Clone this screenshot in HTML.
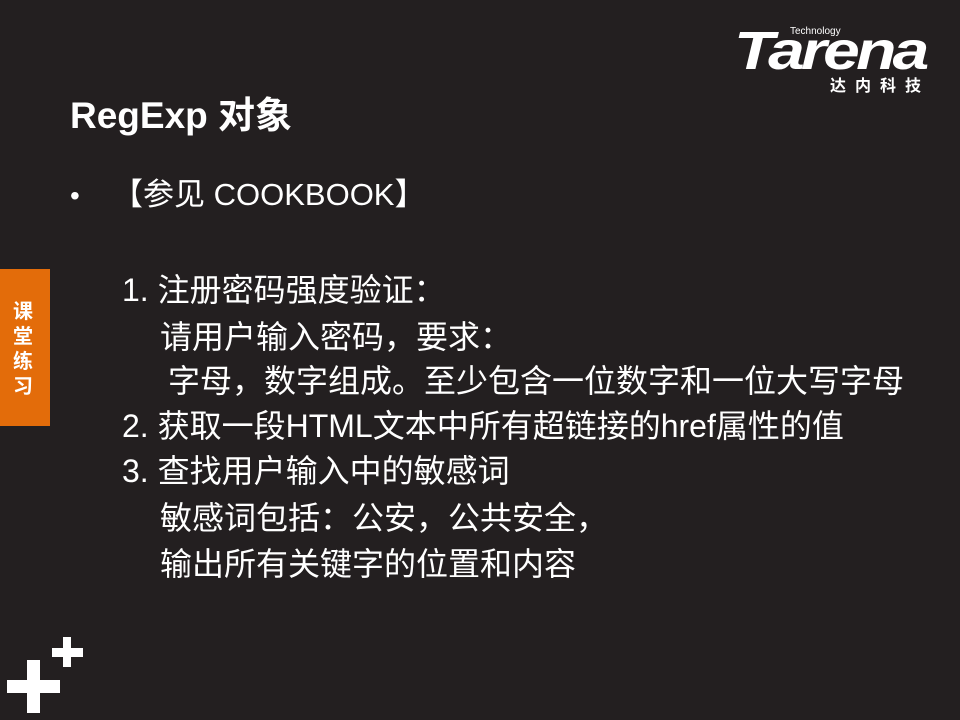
<!DOCTYPE html>
<html><head><meta charset="utf-8"><style>
body{margin:0;width:960px;height:720px;background:#231f20;position:relative;overflow:hidden;font-family:"Liberation Sans","Noto Sans CJK SC",sans-serif;color:#fff}
.a{position:absolute;white-space:nowrap}
.l{font-size:32px;line-height:36px}
</style></head><body>
<div class="a" style="left:734px;top:24px;font:italic bold 54px 'Liberation Sans',sans-serif;letter-spacing:-3px;line-height:54px;transform:scaleX(1.22);transform-origin:left">Tarena</div>
<div class="a" style="left:790px;top:27px;font-size:10px;line-height:10px">Technology</div>
<div class="a" style="left:830px;top:75px;font-size:16px;font-weight:bold;letter-spacing:9px;line-height:18px;font-family:'Noto Sans CJK SC',sans-serif">达内科技</div>
<div class="a" style="left:70px;top:94px;font-size:37px;font-weight:bold;line-height:44px">RegExp 对象</div>
<div class="a" style="left:70px;top:180px;font-size:28px;line-height:32px">•</div>
<div class="a" style="left:112px;top:177px;font-size:31px;line-height:36px">【参见 COOKBOOK】</div>
<div class="a l" style="left:122px;top:272px">1. 注册密码强度验证：</div>
<div class="a l" style="left:160px;top:319px">请用户输入密码，要求：</div>
<div class="a l" style="left:168px;top:363px">字母，数字组成。至少包含一位数字和一位大写字母</div>
<div class="a l" style="left:122px;top:408px">2. 获取一段HTML文本中所有超链接的href属性的值</div>
<div class="a l" style="left:122px;top:453px">3. 查找用户输入中的敏感词</div>
<div class="a l" style="left:160px;top:500px">敏感词包括：公安，公共安全，</div>
<div class="a l" style="left:160px;top:546px">输出所有关键字的位置和内容</div>
<div class="a" style="left:0;top:269px;width:50px;height:157px;background:#e36c0a"></div>
<div class="a" style="left:13px;top:297px;width:22px;font-size:20px;font-weight:bold;line-height:25px;white-space:normal;font-family:'Noto Sans CJK SC',sans-serif">课堂练习</div>
<div class="a" style="left:7px;top:680px;width:53px;height:13px;background:#fff"></div>
<div class="a" style="left:27px;top:660px;width:13px;height:53px;background:#fff"></div>
<div class="a" style="left:52px;top:648px;width:31px;height:9px;background:#fff"></div>
<div class="a" style="left:63px;top:637px;width:8px;height:30px;background:#fff"></div>
</body></html>
